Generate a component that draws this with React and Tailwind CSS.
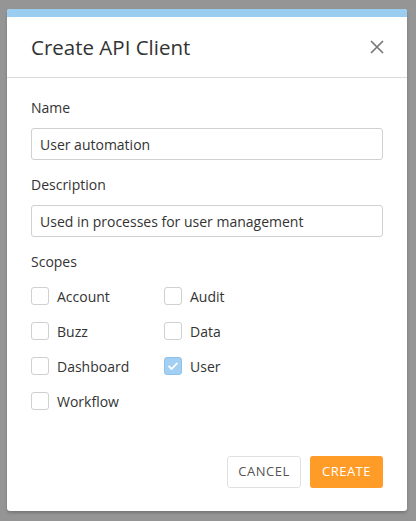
const SCOPES = [
  { name: "Account", checked: false },
  { name: "Audit", checked: false },
  { name: "Buzz", checked: false },
  { name: "Data", checked: false },
  { name: "Dashboard", checked: false },
  { name: "User", checked: true },
  { name: "Workflow", checked: false },
]

function Checkbox({ label, checked }) {
  return (
    <label className="flex items-center gap-2 h-5 text-[14px] text-[#333]">
      <span
        className={`w-[18px] h-[18px] rounded-[3px] border flex items-center justify-center ${
          checked ? "bg-[#a3d0f2] border-[#8dc1ea]" : "bg-white border-[#d0d0d0]"
        }`}
      >
        {checked && (
          <svg width="12" height="12" viewBox="0 0 12 12" fill="none" aria-hidden>
            <path d="M2 6.4l2.6 2.6L10 3.4" stroke="white" strokeWidth="1.8" strokeLinecap="round" strokeLinejoin="round" />
          </svg>
        )}
      </span>
      {label}
    </label>
  )
}

export default function App() {
  return (
    <div className="w-[416px] h-[521px] bg-[#959595] pt-[9px] pl-[7px] font-['Open_Sans',sans-serif]">
      <div className="w-[400px] h-[502px] bg-white rounded-[3px] overflow-hidden flex flex-col shadow-[0_2px_3px_rgba(0,0,0,0.2)]">
        <div className="h-2 bg-[#9bcdf0]" />
        <div className="h-[61px] flex items-center justify-between pl-6 pr-[23px] border-b border-[#dcdcdc]">
          <h2 className="text-[20.5px] text-[#333]">Create API Client</h2>
          <button type="button" className="text-[#777]" aria-label="Close">
            <svg width="14" height="14" viewBox="0 0 14 14" fill="none" aria-hidden>
              <path d="M1 1l12 12M13 1L1 13" stroke="currentColor" strokeWidth="1.7" />
            </svg>
          </button>
        </div>
        <div className="flex flex-col px-6 pt-5 flex-1">
          <label className="text-[14px] text-[#333] leading-5">Name</label>
          <input
            defaultValue="User automation"
            className="mt-[10px] h-8 border border-[#d0d0d0] rounded-[3px] px-2 text-[14px] text-[#333] outline-none"
          />
          <label className="mt-[15px] text-[14px] text-[#333] leading-5">Description</label>
          <input
            defaultValue="Used in processes for user management"
            className="mt-[10px] h-8 border border-[#d0d0d0] rounded-[3px] px-2 text-[14px] text-[#333] outline-none"
          />
          <span className="mt-[15px] text-[14px] text-[#333] leading-5">Scopes</span>
          <div className="mt-[14px] grid grid-cols-[133px_1fr] gap-y-[15px]">
            {SCOPES.map((s) => (
              <Checkbox key={s.name} label={s.name} checked={s.checked} />
            ))}
          </div>
          <div className="mt-[45px] flex justify-end gap-[9px]">
            <button
              type="button"
              className="w-[74px] h-8 border border-[#e0e0e0] rounded-[3px] text-[13px] tracking-[0.5px] text-[#555]"
            >
              CANCEL
            </button>
            <button
              type="button"
              className="w-[73px] h-8 bg-[#ff9c28] rounded-[3px] text-[13px] tracking-[0.5px] text-white"
            >
              CREATE
            </button>
          </div>
        </div>
      </div>
    </div>
  )
}
